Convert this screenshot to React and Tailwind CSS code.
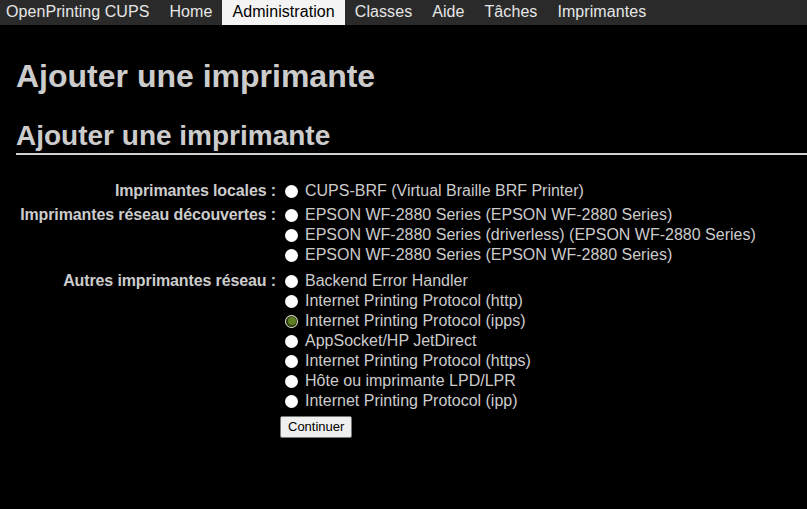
import React, { useState } from "react";

const navItems = [
  { label: "OpenPrinting CUPS", first: true },
  { label: "Home" },
  { label: "Administration", active: true },
  { label: "Classes" },
  { label: "Aide" },
  { label: "Tâches" },
  { label: "Imprimantes" },
];

const groups = [
  {
    title: "Imprimantes locales :",
    options: ["CUPS-BRF (Virtual Braille BRF Printer)"],
  },
  {
    title: "Imprimantes réseau découvertes :",
    options: [
      "EPSON WF-2880 Series (EPSON WF-2880 Series)",
      "EPSON WF-2880 Series (driverless) (EPSON WF-2880 Series)",
      "EPSON WF-2880 Series (EPSON WF-2880 Series)",
    ],
  },
  {
    title: "Autres imprimantes réseau :",
    options: [
      "Backend Error Handler",
      "Internet Printing Protocol (http)",
      "Internet Printing Protocol (ipps)",
      "AppSocket/HP JetDirect",
      "Internet Printing Protocol (https)",
      "Hôte ou imprimante LPD/LPR",
      "Internet Printing Protocol (ipp)",
    ],
  },
];

const Radio = ({ checked }) =>
  checked ? (
    <span className="w-[13px] h-[13px] rounded-full bg-[#dfe6cf] flex items-center justify-center shrink-0">
      <span className="w-[11px] h-[11px] rounded-full bg-[#2f3d12] flex items-center justify-center">
        <span className="w-[8px] h-[8px] rounded-full bg-[#5f7f24]" />
      </span>
    </span>
  ) : (
    <span className="w-[13px] h-[13px] rounded-full bg-white shrink-0" />
  );

const App = () => {
  const [selected, setSelected] = useState("Internet Printing Protocol (ipps)");

  return (
    <div className="min-h-screen bg-black text-[#cccccc] font-['Liberation_Sans',Arial,sans-serif]">
      {/* Top navigation */}
      <div className="flex h-[25px] bg-[#2a2a2a] text-[16px] leading-[23px] tracking-[0.07px]">
        {navItems.map((item) => (
          <div
            key={item.label}
            className={`${item.first ? "pl-[6px] pr-[10px]" : "px-[10px]"} ${
              item.active ? "bg-[#f4f4f4] text-black" : "text-[#e6e6e6]"
            }`}
          >
            {item.label}
          </div>
        ))}
      </div>

      <div className="pl-[16px] pt-[34px]">
        <h1 className="text-[32px] font-bold leading-[34px]">Ajouter une imprimante</h1>
        <h2 className="text-[28px] font-bold leading-[30px] mt-[28px] pb-[2px] border-b-2 border-[#d0d0d0]">
          Ajouter une imprimante
        </h2>
      </div>

      {/* Printer choice form */}
      <div className="mt-[26px] text-[16px] leading-[20px]">
        {groups.map((group, gi) => (
          <div key={group.title} className={`flex ${gi === 0 ? "" : gi === 1 ? "mt-[4px]" : "mt-[6px]"}`}>
            <div className="w-[277px] text-right font-bold pr-[1px] tracking-[-0.12px]">{group.title}</div>
            <div className="flex flex-col pl-[8px]">
              {group.options.map((opt, i) => (
                <label
                  key={opt + i}
                  className="flex items-center h-[20px] gap-[7px] cursor-pointer"
                  onClick={() => setSelected(opt)}
                >
                  <Radio checked={selected === opt} />
                  <span>{opt}</span>
                </label>
              ))}
            </div>
          </div>
        ))}
        <div className="pl-[280px] mt-[5px]">
          <button className="h-[22px] px-[7px] bg-[#efefef] border border-[#767676] rounded-[2px] text-black text-[13px] leading-[20px]">
            Continuer
          </button>
        </div>
      </div>
    </div>
  );
};

export default App;
